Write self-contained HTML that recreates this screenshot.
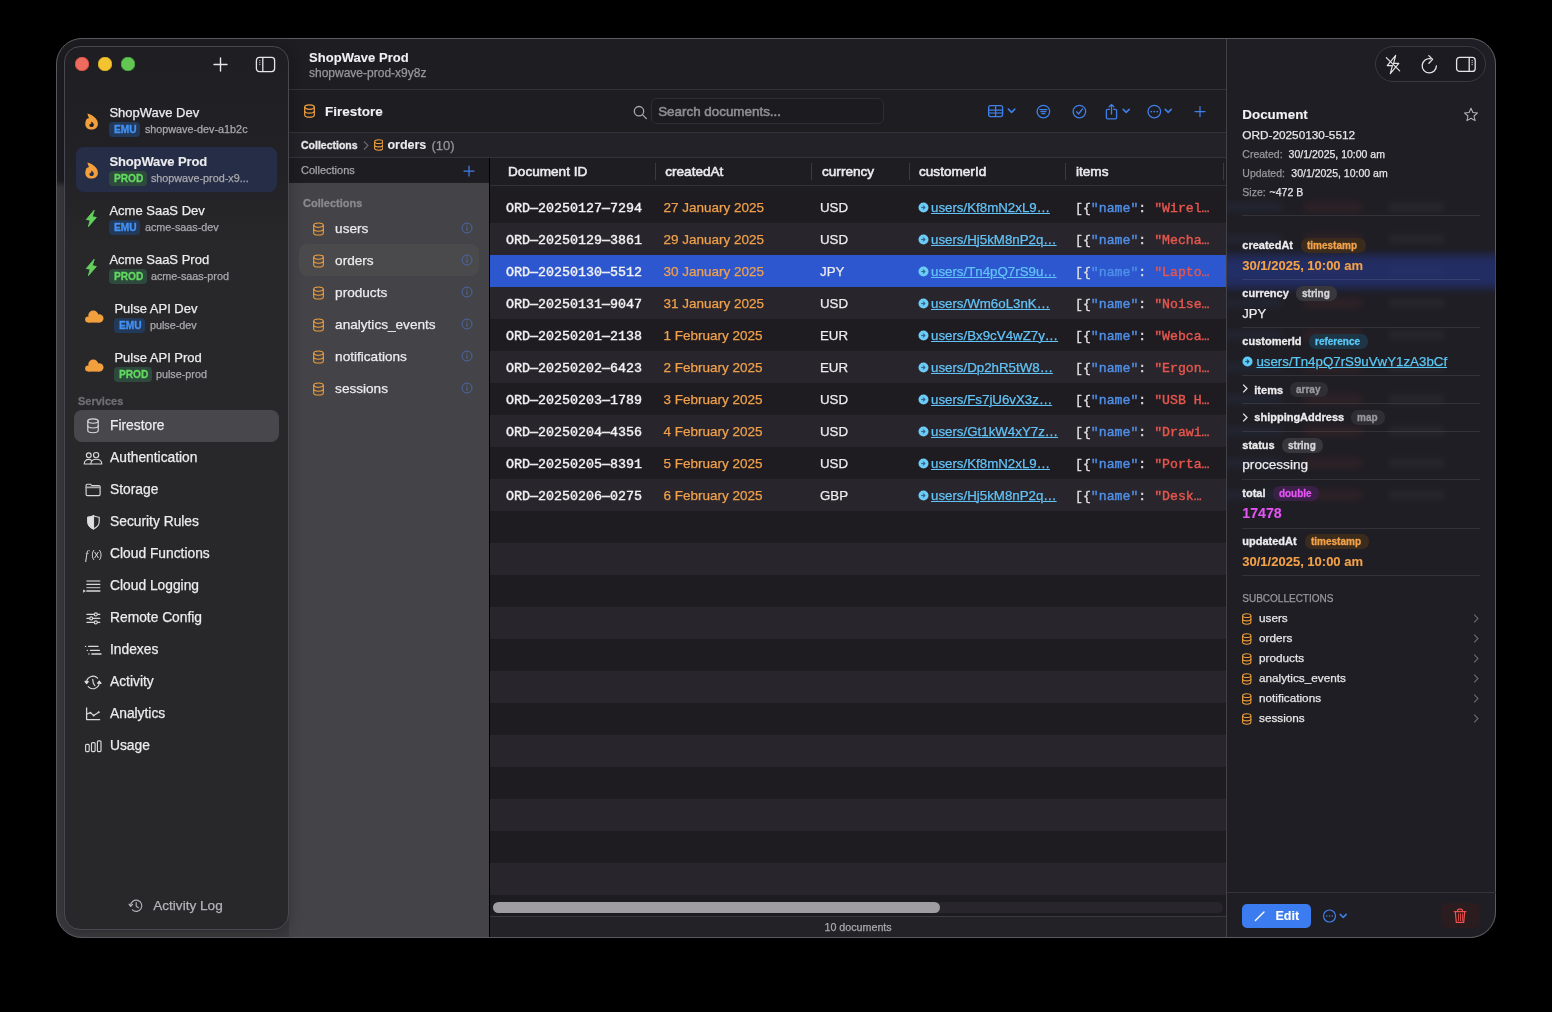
<!DOCTYPE html><html><head><meta charset="utf-8"><title>ShopWave Prod</title><style>*{margin:0;padding:0;box-sizing:border-box}
html,body{width:1552px;height:1012px;overflow:hidden;background:#000}
body{position:relative;font-family:'Liberation Sans',sans-serif}
.abs{position:absolute}
.t{position:absolute;white-space:pre}
#root{position:absolute;left:0;top:0;width:1552px;height:1012px;will-change:transform}
</style></head><body><div id="root"><div class="abs" style="left:56px;top:38px;width:1440px;height:900px;border-radius:26px;overflow:hidden;background:linear-gradient(#1e1d22 0,#1e1d22 142px,#3b3a3e 150px,#3b3a3e 100%)">
<div class="abs" style="left:233px;top:0px;width:937px;height:51px;background:#1e1d22;"></div>
<div class="abs" style="left:233px;top:51px;width:937px;height:1px;background:#34333a;"></div>
<div class="abs" style="left:233px;top:52px;width:937px;height:42px;background:#1e1d22;"></div>
<div class="abs" style="left:233px;top:94px;width:937px;height:1px;background:#34333a;"></div>
<div class="abs" style="left:233px;top:95px;width:937px;height:24px;background:#232228;"></div>
<div class="abs" style="left:233px;top:119px;width:937px;height:1px;background:#34333a;"></div>
<div class="abs" style="left:233px;top:120px;width:200px;height:25px;background:#1e1d22;"></div>
<div class="abs" style="left:233px;top:145px;width:200px;height:755px;background:#444347;"></div>
<div class="abs" style="left:433px;top:120px;width:1px;height:780px;background:#000000;"></div>
<div class="abs" style="left:434px;top:120px;width:736px;height:27px;background:#1e1d22;"></div>
<div class="abs" style="left:434px;top:147px;width:736px;height:1px;background:#34333a;"></div>
<div class="abs" style="left:434px;top:148px;width:736px;height:5px;background:#1e1d22;"></div>
<div class="abs" style="left:434px;top:153px;width:736px;height:32px;background:#1e1c21;"></div>
<div class="abs" style="left:434px;top:185px;width:736px;height:32px;background:#28262c;"></div>
<div class="abs" style="left:434px;top:217px;width:736px;height:32px;background:#2c57cf;"></div>
<div class="abs" style="left:434px;top:249px;width:736px;height:32px;background:#28262c;"></div>
<div class="abs" style="left:434px;top:281px;width:736px;height:32px;background:#1e1c21;"></div>
<div class="abs" style="left:434px;top:313px;width:736px;height:32px;background:#28262c;"></div>
<div class="abs" style="left:434px;top:345px;width:736px;height:32px;background:#1e1c21;"></div>
<div class="abs" style="left:434px;top:377px;width:736px;height:32px;background:#28262c;"></div>
<div class="abs" style="left:434px;top:409px;width:736px;height:32px;background:#1e1c21;"></div>
<div class="abs" style="left:434px;top:441px;width:736px;height:32px;background:#28262c;"></div>
<div class="abs" style="left:434px;top:473px;width:736px;height:32px;background:#1e1c21;"></div>
<div class="abs" style="left:434px;top:505px;width:736px;height:32px;background:#28262c;"></div>
<div class="abs" style="left:434px;top:537px;width:736px;height:32px;background:#1e1c21;"></div>
<div class="abs" style="left:434px;top:569px;width:736px;height:32px;background:#28262c;"></div>
<div class="abs" style="left:434px;top:601px;width:736px;height:32px;background:#1e1c21;"></div>
<div class="abs" style="left:434px;top:633px;width:736px;height:32px;background:#28262c;"></div>
<div class="abs" style="left:434px;top:665px;width:736px;height:32px;background:#1e1c21;"></div>
<div class="abs" style="left:434px;top:697px;width:736px;height:32px;background:#28262c;"></div>
<div class="abs" style="left:434px;top:729px;width:736px;height:32px;background:#1e1c21;"></div>
<div class="abs" style="left:434px;top:761px;width:736px;height:32px;background:#28262c;"></div>
<div class="abs" style="left:434px;top:793px;width:736px;height:32px;background:#1e1c21;"></div>
<div class="abs" style="left:434px;top:825px;width:736px;height:32px;background:#28262c;"></div>
<div class="abs" style="left:434px;top:857px;width:736px;height:21px;background:#1d1c21;"></div>
<div class="abs" style="left:437px;top:864px;width:730px;height:11px;background:#28262c;border-radius:6px"></div>
<div class="abs" style="left:437px;top:864px;width:447px;height:11px;background:#9f9da2;border-radius:6px"></div>
<div class="abs" style="left:434px;top:878px;width:736px;height:1px;background:#3a393f;"></div>
<div class="abs" style="left:434px;top:879px;width:736px;height:21px;background:#232227;"></div>
<div class="abs" style="left:1170px;top:0px;width:1px;height:900px;background:#444249;"></div>
<div class="abs" style="left:1171px;top:0px;width:269px;height:900px;background:#1f1e24;"></div>
</div>
<div class="abs" style="left:56px;top:38px;width:1440px;height:900px;border-radius:26px;border:1px solid #5c5b61"></div>
<div class="abs" style="left:64px;top:46px;width:225px;height:884px;border-radius:16px;border:1px solid #49474f;box-shadow:0 2px 14px rgba(0,0,0,0.28);background:linear-gradient(#1f1e23 0,#222125 120px,#28282a 200px,#28282a 100%)"></div>
<div class="abs" style="left:75px;top:57px;width:14px;height:14px;border-radius:50%;background:#ec6a5e;box-shadow:inset 0 0 0 0.5px #d6473b"></div>
<div class="abs" style="left:98px;top:57px;width:14px;height:14px;border-radius:50%;background:#f4c430;box-shadow:inset 0 0 0 0.5px #d9a623"></div>
<div class="abs" style="left:121px;top:57px;width:14px;height:14px;border-radius:50%;background:#62c554;box-shadow:inset 0 0 0 0.5px #3ea634"></div>
<svg class="abs" style="left:213px;top:57px" width="15" height="15" viewBox="0 0 15 15"><path d="M7.5 1V14M1 7.5H14" stroke="#e6e6e8" stroke-width="1.4" stroke-linecap="round"/></svg>
<svg class="abs" style="left:255px;top:56px" width="21" height="17" viewBox="0 0 21 17"><rect x="1.4" y="1.4" width="18.2" height="14.2" rx="3" fill="none" stroke="#e6e6e8" stroke-width="1.3"/><path d="M7.8 1.4V15.6" stroke="#e6e6e8" stroke-width="1.3"/><path d="M4.2 4.6H5.4M4.2 6.6H5.4M4.2 8.6H5.4" stroke="#bdbdc0" stroke-width="1"/></svg>
<div class="abs" style="left:76px;top:147px;width:201px;height:45px;background:#262d47;border-radius:8px"></div>
<svg class="abs" style="left:84.5px;top:112.5px" width="14" height="18" viewBox="0 0 14 18"><path fill="#f2a03d" fill-rule="evenodd" d="M2.4 0.6C5.5 1.2 8.5 3 10.8 5.6C12.2 7.2 12.9 9 12.9 11C12.9 14.2 10.2 16.6 6.4 16.6C2.8 16.6 0.3 14.2 0.3 11C0.3 9 0.9 7.2 1.6 5.9L4 5.1C3.2 3.8 2.6 2.2 2.4 0.6ZM6.5 8.4C7.9 9.4 8.9 10.6 8.9 12C8.9 13.2 7.8 14.1 6.5 14.1C5.3 14.1 4.4 13.3 4.4 12.2C4.4 11.4 4.8 10.8 5.3 10.4C5.6 11 6 11.2 6.2 11.2C6.1 10.2 6.2 9.2 6.5 8.4Z"/></svg>
<div class="t" style="left:109.4px;top:106.00px;font-size:13px;line-height:13px;color:#ececee;font-weight:400;font-family:'Liberation Sans',sans-serif;-webkit-text-stroke:0.25px currentColor;">ShopWave Dev</div>
<div class="abs" style="left:109.4px;top:122px;width:31px;height:15px;background:#22395a;border-radius:4px"></div><div class="t" style="left:113.9px;top:124.57px;font-size:10.2px;line-height:10.2px;color:#4492f5;font-weight:700;font-family:'Liberation Sans',sans-serif;-webkit-text-stroke:0.3px currentColor;">EMU</div>
<div class="t" style="left:144.9px;top:124.36px;font-size:10.8px;line-height:10.8px;color:#a9a8ad;font-weight:400;font-family:'Liberation Sans',sans-serif;-webkit-text-stroke:0.25px currentColor;">shopwave-dev-a1b2c</div>
<svg class="abs" style="left:84.5px;top:161.5px" width="14" height="18" viewBox="0 0 14 18"><path fill="#f2a03d" fill-rule="evenodd" d="M2.4 0.6C5.5 1.2 8.5 3 10.8 5.6C12.2 7.2 12.9 9 12.9 11C12.9 14.2 10.2 16.6 6.4 16.6C2.8 16.6 0.3 14.2 0.3 11C0.3 9 0.9 7.2 1.6 5.9L4 5.1C3.2 3.8 2.6 2.2 2.4 0.6ZM6.5 8.4C7.9 9.4 8.9 10.6 8.9 12C8.9 13.2 7.8 14.1 6.5 14.1C5.3 14.1 4.4 13.3 4.4 12.2C4.4 11.4 4.8 10.8 5.3 10.4C5.6 11 6 11.2 6.2 11.2C6.1 10.2 6.2 9.2 6.5 8.4Z"/></svg>
<div class="t" style="left:109.4px;top:155.00px;font-size:13px;line-height:13px;color:#ececee;font-weight:700;font-family:'Liberation Sans',sans-serif;-webkit-text-stroke:0.1px currentColor;letter-spacing:-0.12px;">ShopWave Prod</div>
<div class="abs" style="left:109.4px;top:171px;width:37.5px;height:15px;background:#2d4a3c;border-radius:4px"></div><div class="t" style="left:113.9px;top:173.57px;font-size:10.2px;line-height:10.2px;color:#62d860;font-weight:700;font-family:'Liberation Sans',sans-serif;-webkit-text-stroke:0.3px currentColor;">PROD</div>
<div class="t" style="left:150.9px;top:173.36px;font-size:10.8px;line-height:10.8px;color:#a9a8ad;font-weight:400;font-family:'Liberation Sans',sans-serif;-webkit-text-stroke:0.25px currentColor;">shopwave-prod-x9...</div>
<svg class="abs" style="left:85px;top:209px" width="13" height="19" viewBox="0 0 13 19"><path fill="#62d05a" stroke="#62d05a" stroke-width="0.9" stroke-linejoin="round" d="M9.2 1.2L1.3 10.5L5.2 11.2L3.4 17.6L11.4 8.5L7.3 7.7Z"/></svg>
<div class="t" style="left:109.4px;top:204.00px;font-size:13px;line-height:13px;color:#ececee;font-weight:400;font-family:'Liberation Sans',sans-serif;-webkit-text-stroke:0.25px currentColor;">Acme SaaS Dev</div>
<div class="abs" style="left:109.4px;top:220px;width:31px;height:15px;background:#22395a;border-radius:4px"></div><div class="t" style="left:113.9px;top:222.57px;font-size:10.2px;line-height:10.2px;color:#4492f5;font-weight:700;font-family:'Liberation Sans',sans-serif;-webkit-text-stroke:0.3px currentColor;">EMU</div>
<div class="t" style="left:144.9px;top:222.36px;font-size:10.8px;line-height:10.8px;color:#a9a8ad;font-weight:400;font-family:'Liberation Sans',sans-serif;-webkit-text-stroke:0.25px currentColor;">acme-saas-dev</div>
<svg class="abs" style="left:85px;top:258px" width="13" height="19" viewBox="0 0 13 19"><path fill="#62d05a" stroke="#62d05a" stroke-width="0.9" stroke-linejoin="round" d="M9.2 1.2L1.3 10.5L5.2 11.2L3.4 17.6L11.4 8.5L7.3 7.7Z"/></svg>
<div class="t" style="left:109.4px;top:253.00px;font-size:13px;line-height:13px;color:#ececee;font-weight:400;font-family:'Liberation Sans',sans-serif;-webkit-text-stroke:0.25px currentColor;">Acme SaaS Prod</div>
<div class="abs" style="left:109.4px;top:269px;width:37.5px;height:15px;background:#2d4a3c;border-radius:4px"></div><div class="t" style="left:113.9px;top:271.57px;font-size:10.2px;line-height:10.2px;color:#62d860;font-weight:700;font-family:'Liberation Sans',sans-serif;-webkit-text-stroke:0.3px currentColor;">PROD</div>
<div class="t" style="left:150.9px;top:271.36px;font-size:10.8px;line-height:10.8px;color:#a9a8ad;font-weight:400;font-family:'Liberation Sans',sans-serif;-webkit-text-stroke:0.25px currentColor;">acme-saas-prod</div>
<svg class="abs" style="left:84.5px;top:310px" width="19" height="13" viewBox="0 0 19 13"><g fill="#f2a03d"><circle cx="8.3" cy="5.6" r="5"/><circle cx="14.3" cy="8.4" r="4.2"/><circle cx="3.1" cy="9.6" r="3"/><rect x="3.1" y="8" width="11.4" height="4.6"/></g></svg>
<div class="t" style="left:114.4px;top:302.00px;font-size:13px;line-height:13px;color:#ececee;font-weight:400;font-family:'Liberation Sans',sans-serif;-webkit-text-stroke:0.25px currentColor;">Pulse API Dev</div>
<div class="abs" style="left:114.4px;top:318px;width:31px;height:15px;background:#22395a;border-radius:4px"></div><div class="t" style="left:118.9px;top:320.57px;font-size:10.2px;line-height:10.2px;color:#4492f5;font-weight:700;font-family:'Liberation Sans',sans-serif;-webkit-text-stroke:0.3px currentColor;">EMU</div>
<div class="t" style="left:149.9px;top:320.36px;font-size:10.8px;line-height:10.8px;color:#a9a8ad;font-weight:400;font-family:'Liberation Sans',sans-serif;-webkit-text-stroke:0.25px currentColor;">pulse-dev</div>
<svg class="abs" style="left:84.5px;top:359px" width="19" height="13" viewBox="0 0 19 13"><g fill="#f2a03d"><circle cx="8.3" cy="5.6" r="5"/><circle cx="14.3" cy="8.4" r="4.2"/><circle cx="3.1" cy="9.6" r="3"/><rect x="3.1" y="8" width="11.4" height="4.6"/></g></svg>
<div class="t" style="left:114.4px;top:351.00px;font-size:13px;line-height:13px;color:#ececee;font-weight:400;font-family:'Liberation Sans',sans-serif;-webkit-text-stroke:0.25px currentColor;">Pulse API Prod</div>
<div class="abs" style="left:114.4px;top:367px;width:37.5px;height:15px;background:#2d4a3c;border-radius:4px"></div><div class="t" style="left:118.9px;top:369.57px;font-size:10.2px;line-height:10.2px;color:#62d860;font-weight:700;font-family:'Liberation Sans',sans-serif;-webkit-text-stroke:0.3px currentColor;">PROD</div>
<div class="t" style="left:155.9px;top:369.36px;font-size:10.8px;line-height:10.8px;color:#a9a8ad;font-weight:400;font-family:'Liberation Sans',sans-serif;-webkit-text-stroke:0.25px currentColor;">pulse-prod</div>
<div class="t" style="left:78px;top:395.69px;font-size:11px;line-height:11px;color:#6f6e74;font-weight:700;font-family:'Liberation Sans',sans-serif;-webkit-text-stroke:0.3px currentColor;">Services</div>
<div class="abs" style="left:74px;top:410px;width:205px;height:32px;background:#48474b;border-radius:8px"></div>
<svg class="abs" style="left:83px;top:417px" width="20" height="18" viewBox="0 0 20 18"><g fill="none" stroke="#d9d9dc" stroke-width="1.15" stroke-linecap="round" stroke-linejoin="round"><ellipse cx="10" cy="4" rx="5.2" ry="2.2"/><path d="M4.8 4V13.6A5.2 2.2 0 0 0 15.2 13.6V4"/><path d="M4.8 8.8A5.2 2.2 0 0 0 15.2 8.8"/></g></svg>
<div class="t" style="left:110px;top:419.32px;font-size:13.8px;line-height:13.8px;color:#ececee;font-weight:400;font-family:'Liberation Sans',sans-serif;-webkit-text-stroke:0.25px currentColor;">Firestore</div>
<svg class="abs" style="left:83px;top:449px" width="20" height="18" viewBox="0 0 20 18"><g fill="none" stroke="#d9d9dc" stroke-width="1.15" stroke-linecap="round" stroke-linejoin="round"><circle cx="5.8" cy="6.3" r="2.4"/><circle cx="13.1" cy="6.1" r="2.6"/><path d="M7.8 15C7.8 12.1 10.2 10.2 13.3 10.2C16.4 10.2 18.8 12.1 18.8 15Z"/><path d="M7.6 15H1.2C1.2 12.4 3.2 10.4 5.8 10.4C6.9 10.4 7.9 10.8 8.7 11.4"/></g></svg>
<div class="t" style="left:110px;top:451.32px;font-size:13.8px;line-height:13.8px;color:#ececee;font-weight:400;font-family:'Liberation Sans',sans-serif;-webkit-text-stroke:0.25px currentColor;">Authentication</div>
<svg class="abs" style="left:83px;top:481px" width="20" height="18" viewBox="0 0 20 18"><g fill="none" stroke="#d9d9dc" stroke-width="1.15" stroke-linecap="round" stroke-linejoin="round"><path d="M3.1 4.6C3.1 3.8 3.6 3.2 4.4 3.2H7.4L8.8 4.6H15.8C16.6 4.6 17.1 5.1 17.1 5.9V13.3C17.1 14.1 16.6 14.6 15.8 14.6H4.4C3.6 14.6 3.1 14.1 3.1 13.3Z"/><path d="M3.1 6.4H17.1" stroke-width="1.6" stroke="#a9a9ac"/></g></svg>
<div class="t" style="left:110px;top:483.32px;font-size:13.8px;line-height:13.8px;color:#ececee;font-weight:400;font-family:'Liberation Sans',sans-serif;-webkit-text-stroke:0.25px currentColor;">Storage</div>
<svg class="abs" style="left:83px;top:513px" width="20" height="18" viewBox="0 0 20 18"><g fill="none" stroke="#d9d9dc" stroke-width="1.15" stroke-linecap="round" stroke-linejoin="round"><path d="M10.5 2.7C12.2 3.5 14.2 4 16.2 4.2V8.6C16.2 12.2 13.9 14.6 10.5 15.9C7.1 14.6 4.8 12.2 4.8 8.6V4.2C6.8 4 8.8 3.5 10.5 2.7Z"/><path d="M10.5 2.7V15.9C7.1 14.6 4.8 12.2 4.8 8.6V4.2C6.8 4 8.8 3.5 10.5 2.7Z" fill="#e0e0e2"/></g></svg>
<div class="t" style="left:110px;top:515.32px;font-size:13.8px;line-height:13.8px;color:#ececee;font-weight:400;font-family:'Liberation Sans',sans-serif;-webkit-text-stroke:0.25px currentColor;">Security Rules</div>
<svg class="abs" style="left:83px;top:545px" width="20" height="18" viewBox="0 0 20 18"><g fill="none" stroke="#d9d9dc" stroke-width="1.15" stroke-linecap="round" stroke-linejoin="round"></g><text x="2" y="13.6" font-family="Liberation Serif" font-style="italic" font-size="12" fill="#d9d9dc">f</text><text x="8.2" y="13.2" font-family="Liberation Sans" font-size="10" fill="#d9d9dc" letter-spacing="-0.4">(x)</text><g></g></svg>
<div class="t" style="left:110px;top:547.32px;font-size:13.8px;line-height:13.8px;color:#ececee;font-weight:400;font-family:'Liberation Sans',sans-serif;-webkit-text-stroke:0.25px currentColor;">Cloud Functions</div>
<svg class="abs" style="left:83px;top:577px" width="20" height="18" viewBox="0 0 20 18"><g fill="none" stroke="#d9d9dc" stroke-width="1.15" stroke-linecap="round" stroke-linejoin="round"><path d="M3.9 4H16.8" stroke-width="1.3" stroke="#a9a9ac"/><path d="M3.9 7.4H16.8" stroke-width="1.3"/><path d="M3.9 10.6H16.8" stroke-width="1.3" stroke="#a9a9ac"/><path d="M3.9 14H16.8" stroke-width="1.5"/><path d="M0.2 12.4L2.9 14L0.2 15.7Z" fill="#d9d9dc" stroke="none"/></g></svg>
<div class="t" style="left:110px;top:579.32px;font-size:13.8px;line-height:13.8px;color:#ececee;font-weight:400;font-family:'Liberation Sans',sans-serif;-webkit-text-stroke:0.25px currentColor;">Cloud Logging</div>
<svg class="abs" style="left:83px;top:609px" width="20" height="18" viewBox="0 0 20 18"><g fill="none" stroke="#d9d9dc" stroke-width="1.15" stroke-linecap="round" stroke-linejoin="round"><path d="M3.9 5.4H16.8M3.9 9.4H16.8M3.9 13.4H16.8"/><circle cx="12.8" cy="5.4" r="1.5" fill="#28282a"/><circle cx="8.2" cy="9.4" r="1.5" fill="#28282a"/><circle cx="12.8" cy="13.4" r="1.5" fill="#28282a"/></g></svg>
<div class="t" style="left:110px;top:611.32px;font-size:13.8px;line-height:13.8px;color:#ececee;font-weight:400;font-family:'Liberation Sans',sans-serif;-webkit-text-stroke:0.25px currentColor;">Remote Config</div>
<svg class="abs" style="left:83px;top:641px" width="20" height="18" viewBox="0 0 20 18"><g fill="none" stroke="#d9d9dc" stroke-width="1.15" stroke-linecap="round" stroke-linejoin="round"><path d="M5.6 5.4H15M7.4 9.4H16.4M8.8 13H18" stroke-width="1.3"/><circle cx="2.6" cy="5.4" r="0.7" fill="#d9d9dc" stroke="none"/><circle cx="4.4" cy="9.4" r="0.7" fill="#d9d9dc" stroke="none"/><circle cx="5.9" cy="13" r="0.7" fill="#d9d9dc" stroke="none"/></g></svg>
<div class="t" style="left:110px;top:643.32px;font-size:13.8px;line-height:13.8px;color:#ececee;font-weight:400;font-family:'Liberation Sans',sans-serif;-webkit-text-stroke:0.25px currentColor;">Indexes</div>
<svg class="abs" style="left:83px;top:673px" width="20" height="18" viewBox="0 0 20 18"><g fill="none" stroke="#d9d9dc" stroke-width="1.15" stroke-linecap="round" stroke-linejoin="round"><path d="M3.6 9.9A6.4 6.4 0 0 1 14.6 5.2"/><path d="M16.3 8.9A6.4 6.4 0 0 1 5.2 13.6"/><path d="M2 8.4L3.6 10.6L5.3 8.6Z" fill="#d9d9dc"/><path d="M18 10.4L16.3 8.2L14.6 10.2Z" fill="#d9d9dc"/><path d="M9.7 6.4L10.4 10.4L11.9 12.7"/></g></svg>
<div class="t" style="left:110px;top:675.32px;font-size:13.8px;line-height:13.8px;color:#ececee;font-weight:400;font-family:'Liberation Sans',sans-serif;-webkit-text-stroke:0.25px currentColor;">Activity</div>
<svg class="abs" style="left:83px;top:705px" width="20" height="18" viewBox="0 0 20 18"><g fill="none" stroke="#d9d9dc" stroke-width="1.15" stroke-linecap="round" stroke-linejoin="round"><path d="M3.6 3V14.6H16.6" stroke-width="1.3"/><path d="M3.9 8.9L7.4 7.7L10.7 10.4L15.7 7.2"/><g fill="#d9d9dc" stroke="none"><circle cx="7.4" cy="7.7" r="1"/><circle cx="10.7" cy="10.4" r="1"/><circle cx="15.7" cy="7.2" r="1"/></g></g></svg>
<div class="t" style="left:110px;top:707.32px;font-size:13.8px;line-height:13.8px;color:#ececee;font-weight:400;font-family:'Liberation Sans',sans-serif;-webkit-text-stroke:0.25px currentColor;">Analytics</div>
<svg class="abs" style="left:83px;top:737px" width="20" height="18" viewBox="0 0 20 18"><g fill="none" stroke="#d9d9dc" stroke-width="1.15" stroke-linecap="round" stroke-linejoin="round"><rect x="2.6" y="7.4" width="3.6" height="7.2" rx="1"/><rect x="8.5" y="5.6" width="3.6" height="9" rx="1"/><rect x="14.4" y="3.8" width="3.6" height="10.8" rx="1"/></g></svg>
<div class="t" style="left:110px;top:739.32px;font-size:13.8px;line-height:13.8px;color:#ececee;font-weight:400;font-family:'Liberation Sans',sans-serif;-webkit-text-stroke:0.25px currentColor;">Usage</div>
<svg class="abs" style="left:128px;top:898px" width="16" height="16" viewBox="0 0 16 16"><g fill="none" stroke="#b4b3b8" stroke-width="1.15" stroke-linecap="round" stroke-linejoin="round"><path d="M2.6 7.6A5.6 5.6 0 1 1 4.4 11.9"/><path d="M1 6.2L2.7 8.4L4.6 6.4"/><path d="M8.2 4.6V8.1L10.4 9.7"/></g></svg>
<div class="t" style="left:153.2px;top:899.49px;font-size:13.6px;line-height:13.6px;color:#b4b3b8;font-weight:400;font-family:'Liberation Sans',sans-serif;-webkit-text-stroke:0.25px currentColor;">Activity Log</div>
<div class="t" style="left:309px;top:51.00px;font-size:13px;line-height:13px;color:#f0f0f2;font-weight:700;font-family:'Liberation Sans',sans-serif;-webkit-text-stroke:0.1px currentColor;letter-spacing:0.05px">ShopWave Prod</div>
<div class="t" style="left:309px;top:66.84px;font-size:12px;line-height:12px;color:#98979c;font-weight:400;font-family:'Liberation Sans',sans-serif;-webkit-text-stroke:0.25px currentColor;">shopwave-prod-x9y8z</div>
<svg class="abs" style="left:304px;top:104px" width="11" height="14" viewBox="0 0 11 14"><g fill="none" stroke="#f0a03c" stroke-width="1.2"><ellipse cx="5.5" cy="3.1" rx="4.8" ry="2.2"/><path d="M0.7 3.1V10.9A4.8 2.2 0 0 0 10.3 10.9V3.1"/><path d="M0.7 7A4.8 2.2 0 0 0 10.3 7"/></g></svg>
<div class="t" style="left:325px;top:104.57px;font-size:13.5px;line-height:13.5px;color:#f0f0f2;font-weight:700;font-family:'Liberation Sans',sans-serif;-webkit-text-stroke:0.1px currentColor;">Firestore</div>
<svg class="abs" style="left:633px;top:105px" width="15" height="15" viewBox="0 0 15 15"><g fill="none" stroke="#a8a7ac" stroke-width="1.3" stroke-linecap="round"><circle cx="6" cy="6.2" r="4.7"/><path d="M9.4 9.6L13.4 13.6"/></g></svg>
<div class="abs" style="left:651px;top:98px;width:233px;height:26px;background:#1c1b20;border-radius:6px;border:1px solid #2e2d33"></div>
<div class="t" style="left:658.2px;top:104.66px;font-size:13.4px;line-height:13.4px;color:#8f8e94;font-weight:400;font-family:'Liberation Sans',sans-serif;-webkit-text-stroke:0.55px currentColor;">Search documents...</div>
<svg class="abs" style="left:985px;top:100px" width="230" height="24" viewBox="0 0 230 24"><g fill="none" stroke="#3f7fe8" stroke-width="1.3" stroke-linecap="round" stroke-linejoin="round"><rect x="3.6" y="5.6" width="14" height="11" rx="2"/><path d="M3.6 10.1H17.6M10.6 5.6V16.6"/><path d="M3.8 13H17.4" stroke-width="1.7" stroke-opacity="0.75"/><path d="M23.4 9.1L26.6 12.4L29.8 9.1" stroke-width="1.6"/><circle cx="58.4" cy="11.6" r="6.3"/><path d="M54.9 9.6H61.9M55.9 11.7H60.9M57 13.7H59.8"/><circle cx="94.4" cy="11.6" r="6.3"/><path d="M91.6 11.8L93.6 14L97.4 9"/><path d="M124.4 9.3H122.6C121.9 9.3 121.4 9.8 121.4 10.5V17.6C121.4 18.3 121.9 18.8 122.6 18.8H130.4C131.1 18.8 131.6 18.3 131.6 17.6V10.5C131.6 9.8 131.1 9.3 130.4 9.3H128.6"/><path d="M126.5 14V4.6M124.2 6.8L126.5 4.5L128.8 6.8"/><path d="M138.2 9.4L141.2 12.4L144.2 9.4" stroke-width="1.6"/><circle cx="169.3" cy="11.6" r="6.3"/><path d="M180.2 9.4L183.2 12.4L186.2 9.4" stroke-width="1.6"/><path d="M215 6.6V16.6M210 11.6H220" stroke-width="1.25"/></g><g fill="#3f7fe8"><circle cx="166.3" cy="11.6" r="0.9"/><circle cx="169.3" cy="11.6" r="0.9"/><circle cx="172.3" cy="11.6" r="0.9"/></g></svg>
<div class="t" style="left:301px;top:140.11px;font-size:10.5px;line-height:10.5px;color:#e6e6e8;font-weight:700;font-family:'Liberation Sans',sans-serif;-webkit-text-stroke:0.3px currentColor;">Collections</div>
<svg class="abs" style="left:362px;top:140px" width="8" height="11" viewBox="0 0 8 11"><path d="M2 1.5L6 5.5L2 9.5" fill="none" stroke="#6a6970" stroke-width="1.1"/></svg>
<svg class="abs" style="left:373.5px;top:138.5px" width="9.5" height="12" viewBox="0 0 11 14"><g fill="none" stroke="#f0a03c" stroke-width="1.3"><ellipse cx="5.5" cy="3.1" rx="4.8" ry="2.2"/><path d="M0.7 3.1V10.9A4.8 2.2 0 0 0 10.3 10.9V3.1"/><path d="M0.7 7A4.8 2.2 0 0 0 10.3 7"/></g></svg>
<div class="t" style="left:387.4px;top:138.92px;font-size:12.5px;line-height:12.5px;color:#ececee;font-weight:700;font-family:'Liberation Sans',sans-serif;-webkit-text-stroke:0.1px currentColor;">orders</div>
<div class="t" style="left:431.5px;top:138.50px;font-size:13px;line-height:13px;color:#98979c;font-weight:400;font-family:'Liberation Sans',sans-serif;-webkit-text-stroke:0.25px currentColor;">(10)</div>
<div class="t" style="left:301px;top:165.19px;font-size:11px;line-height:11px;color:#a5a4aa;font-weight:400;font-family:'Liberation Sans',sans-serif;-webkit-text-stroke:0.25px currentColor;">Collections</div>
<svg class="abs" style="left:462.2px;top:163.6px" width="14" height="14" viewBox="0 0 14 14"><path d="M7 2V12M2 7H12" stroke="#3f7fe8" stroke-width="1.25" stroke-linecap="round"/></svg>
<div class="t" style="left:303px;top:197.69px;font-size:11px;line-height:11px;color:#8a898f;font-weight:700;font-family:'Liberation Sans',sans-serif;-webkit-text-stroke:0.3px currentColor;">Collections</div>
<div class="abs" style="left:299px;top:244px;width:180px;height:32px;background:#4a494c;border-radius:8px"></div>
<svg class="abs" style="left:312.8px;top:221.5px" width="11" height="14" viewBox="0 0 11 14"><g fill="none" stroke="#f0a03c" stroke-width="1.05"><ellipse cx="5.5" cy="3.1" rx="4.8" ry="2.2"/><path d="M0.7 3.1V10.9A4.8 2.2 0 0 0 10.3 10.9V3.1"/><path d="M0.7 7A4.8 2.2 0 0 0 10.3 7"/></g></svg>
<div class="t" style="left:335.1px;top:222.09px;font-size:13.6px;line-height:13.6px;color:#ececee;font-weight:400;font-family:'Liberation Sans',sans-serif;-webkit-text-stroke:0.25px currentColor;">users</div>
<svg class="abs" style="left:460.8px;top:222px" width="12" height="12" viewBox="0 0 12 12"><circle cx="6" cy="6" r="5" fill="none" stroke="#4b68a8" stroke-width="1"/><path d="M6 5.2V8.8" stroke="#4b68a8" stroke-width="1.1"/><circle cx="6" cy="3.4" r="0.65" fill="#4b68a8"/></svg>
<svg class="abs" style="left:312.8px;top:253.5px" width="11" height="14" viewBox="0 0 11 14"><g fill="none" stroke="#f0a03c" stroke-width="1.05"><ellipse cx="5.5" cy="3.1" rx="4.8" ry="2.2"/><path d="M0.7 3.1V10.9A4.8 2.2 0 0 0 10.3 10.9V3.1"/><path d="M0.7 7A4.8 2.2 0 0 0 10.3 7"/></g></svg>
<div class="t" style="left:335.1px;top:254.09px;font-size:13.6px;line-height:13.6px;color:#ececee;font-weight:400;font-family:'Liberation Sans',sans-serif;-webkit-text-stroke:0.25px currentColor;">orders</div>
<svg class="abs" style="left:460.8px;top:254px" width="12" height="12" viewBox="0 0 12 12"><circle cx="6" cy="6" r="5" fill="none" stroke="#4b68a8" stroke-width="1"/><path d="M6 5.2V8.8" stroke="#4b68a8" stroke-width="1.1"/><circle cx="6" cy="3.4" r="0.65" fill="#4b68a8"/></svg>
<svg class="abs" style="left:312.8px;top:285.5px" width="11" height="14" viewBox="0 0 11 14"><g fill="none" stroke="#f0a03c" stroke-width="1.05"><ellipse cx="5.5" cy="3.1" rx="4.8" ry="2.2"/><path d="M0.7 3.1V10.9A4.8 2.2 0 0 0 10.3 10.9V3.1"/><path d="M0.7 7A4.8 2.2 0 0 0 10.3 7"/></g></svg>
<div class="t" style="left:335.1px;top:286.09px;font-size:13.6px;line-height:13.6px;color:#ececee;font-weight:400;font-family:'Liberation Sans',sans-serif;-webkit-text-stroke:0.25px currentColor;">products</div>
<svg class="abs" style="left:460.8px;top:286px" width="12" height="12" viewBox="0 0 12 12"><circle cx="6" cy="6" r="5" fill="none" stroke="#4b68a8" stroke-width="1"/><path d="M6 5.2V8.8" stroke="#4b68a8" stroke-width="1.1"/><circle cx="6" cy="3.4" r="0.65" fill="#4b68a8"/></svg>
<svg class="abs" style="left:312.8px;top:317.5px" width="11" height="14" viewBox="0 0 11 14"><g fill="none" stroke="#f0a03c" stroke-width="1.05"><ellipse cx="5.5" cy="3.1" rx="4.8" ry="2.2"/><path d="M0.7 3.1V10.9A4.8 2.2 0 0 0 10.3 10.9V3.1"/><path d="M0.7 7A4.8 2.2 0 0 0 10.3 7"/></g></svg>
<div class="t" style="left:335.1px;top:318.09px;font-size:13.6px;line-height:13.6px;color:#ececee;font-weight:400;font-family:'Liberation Sans',sans-serif;-webkit-text-stroke:0.25px currentColor;">analytics_events</div>
<svg class="abs" style="left:460.8px;top:318px" width="12" height="12" viewBox="0 0 12 12"><circle cx="6" cy="6" r="5" fill="none" stroke="#4b68a8" stroke-width="1"/><path d="M6 5.2V8.8" stroke="#4b68a8" stroke-width="1.1"/><circle cx="6" cy="3.4" r="0.65" fill="#4b68a8"/></svg>
<svg class="abs" style="left:312.8px;top:349.5px" width="11" height="14" viewBox="0 0 11 14"><g fill="none" stroke="#f0a03c" stroke-width="1.05"><ellipse cx="5.5" cy="3.1" rx="4.8" ry="2.2"/><path d="M0.7 3.1V10.9A4.8 2.2 0 0 0 10.3 10.9V3.1"/><path d="M0.7 7A4.8 2.2 0 0 0 10.3 7"/></g></svg>
<div class="t" style="left:335.1px;top:350.09px;font-size:13.6px;line-height:13.6px;color:#ececee;font-weight:400;font-family:'Liberation Sans',sans-serif;-webkit-text-stroke:0.25px currentColor;">notifications</div>
<svg class="abs" style="left:460.8px;top:350px" width="12" height="12" viewBox="0 0 12 12"><circle cx="6" cy="6" r="5" fill="none" stroke="#4b68a8" stroke-width="1"/><path d="M6 5.2V8.8" stroke="#4b68a8" stroke-width="1.1"/><circle cx="6" cy="3.4" r="0.65" fill="#4b68a8"/></svg>
<svg class="abs" style="left:312.8px;top:381.5px" width="11" height="14" viewBox="0 0 11 14"><g fill="none" stroke="#f0a03c" stroke-width="1.05"><ellipse cx="5.5" cy="3.1" rx="4.8" ry="2.2"/><path d="M0.7 3.1V10.9A4.8 2.2 0 0 0 10.3 10.9V3.1"/><path d="M0.7 7A4.8 2.2 0 0 0 10.3 7"/></g></svg>
<div class="t" style="left:335.1px;top:382.09px;font-size:13.6px;line-height:13.6px;color:#ececee;font-weight:400;font-family:'Liberation Sans',sans-serif;-webkit-text-stroke:0.25px currentColor;">sessions</div>
<svg class="abs" style="left:460.8px;top:382px" width="12" height="12" viewBox="0 0 12 12"><circle cx="6" cy="6" r="5" fill="none" stroke="#4b68a8" stroke-width="1"/><path d="M6 5.2V8.8" stroke="#4b68a8" stroke-width="1.1"/><circle cx="6" cy="3.4" r="0.65" fill="#4b68a8"/></svg>
<div class="t" style="left:508px;top:164.99px;font-size:13.6px;line-height:13.6px;color:#ececee;font-weight:400;font-family:'Liberation Sans',sans-serif;-webkit-text-stroke:0.55px currentColor;">Document ID</div>
<div class="t" style="left:665.2px;top:164.99px;font-size:13.6px;line-height:13.6px;color:#ececee;font-weight:400;font-family:'Liberation Sans',sans-serif;-webkit-text-stroke:0.55px currentColor;">createdAt</div>
<div class="t" style="left:822px;top:164.99px;font-size:13.6px;line-height:13.6px;color:#ececee;font-weight:400;font-family:'Liberation Sans',sans-serif;-webkit-text-stroke:0.55px currentColor;">currency</div>
<div class="t" style="left:919px;top:164.99px;font-size:13.6px;line-height:13.6px;color:#ececee;font-weight:400;font-family:'Liberation Sans',sans-serif;-webkit-text-stroke:0.55px currentColor;">customerId</div>
<div class="t" style="left:1076px;top:164.99px;font-size:13.6px;line-height:13.6px;color:#ececee;font-weight:400;font-family:'Liberation Sans',sans-serif;-webkit-text-stroke:0.55px currentColor;">items</div>
<div class="abs" style="left:654.6px;top:163px;width:1px;height:17px;background:#3b3a40;"></div>
<div class="abs" style="left:811.4px;top:163px;width:1px;height:17px;background:#3b3a40;"></div>
<div class="abs" style="left:908.5px;top:163px;width:1px;height:17px;background:#3b3a40;"></div>
<div class="abs" style="left:1065.4px;top:163px;width:1px;height:17px;background:#3b3a40;"></div>
<div class="abs" style="left:1222.6px;top:163px;width:1px;height:17px;background:#3b3a40;"></div>
<div class="t" style="left:506px;top:202.17px;font-size:13.35px;line-height:13.35px;color:#f2f2f4;font-weight:400;font-family:'Liberation Mono',monospace;-webkit-text-stroke:0.4px currentColor;">ORD—20250127—7294</div>
<div class="t" style="left:663.5px;top:200.97px;font-size:13.5px;line-height:13.5px;color:#f0a04b;font-weight:400;font-family:'Liberation Sans',sans-serif;-webkit-text-stroke:0.25px currentColor;">27 January 2025</div>
<div class="t" style="left:820px;top:201.14px;font-size:13.3px;line-height:13.3px;color:#ececee;font-weight:400;font-family:'Liberation Sans',sans-serif;-webkit-text-stroke:0.25px currentColor;">USD</div>
<svg class="abs" style="left:918px;top:202.0px" width="11" height="11" viewBox="0 0 11 11"><circle cx="5.5" cy="5.5" r="5" fill="#6ccbf7"/><path d="M3.2 5.5H6.4M5 3.6L6.9 5.5L5 7.4" stroke="#2a5670" stroke-opacity="0.85" stroke-width="1.1" fill="none"/></svg>
<div class="t" style="left:931px;top:201.14px;font-size:13.3px;line-height:13.3px;color:#62c2f6;font-weight:400;font-family:'Liberation Sans',sans-serif;-webkit-text-stroke:0.25px currentColor;text-decoration:underline;text-underline-offset:1px;text-decoration-thickness:1px">users/Kf8mN2xL9…</div>
<div class="t" style="left:1075px;top:202.28px;font-size:13.2px;line-height:13.2px;color:#dcdcde;font-weight:400;font-family:'Liberation Mono',monospace;-webkit-text-stroke:0.4px currentColor;">[{<span style="color:#4f8fe8">"name"</span>: <span style="color:#e5564e">"Wirel…</span></div>
<div class="t" style="left:506px;top:234.17px;font-size:13.35px;line-height:13.35px;color:#f2f2f4;font-weight:400;font-family:'Liberation Mono',monospace;-webkit-text-stroke:0.4px currentColor;">ORD—20250129—3861</div>
<div class="t" style="left:663.5px;top:232.97px;font-size:13.5px;line-height:13.5px;color:#f0a04b;font-weight:400;font-family:'Liberation Sans',sans-serif;-webkit-text-stroke:0.25px currentColor;">29 January 2025</div>
<div class="t" style="left:820px;top:233.14px;font-size:13.3px;line-height:13.3px;color:#ececee;font-weight:400;font-family:'Liberation Sans',sans-serif;-webkit-text-stroke:0.25px currentColor;">USD</div>
<svg class="abs" style="left:918px;top:234.0px" width="11" height="11" viewBox="0 0 11 11"><circle cx="5.5" cy="5.5" r="5" fill="#6ccbf7"/><path d="M3.2 5.5H6.4M5 3.6L6.9 5.5L5 7.4" stroke="#2a5670" stroke-opacity="0.85" stroke-width="1.1" fill="none"/></svg>
<div class="t" style="left:931px;top:233.14px;font-size:13.3px;line-height:13.3px;color:#62c2f6;font-weight:400;font-family:'Liberation Sans',sans-serif;-webkit-text-stroke:0.25px currentColor;text-decoration:underline;text-underline-offset:1px;text-decoration-thickness:1px">users/Hj5kM8nP2q…</div>
<div class="t" style="left:1075px;top:234.28px;font-size:13.2px;line-height:13.2px;color:#dcdcde;font-weight:400;font-family:'Liberation Mono',monospace;-webkit-text-stroke:0.4px currentColor;">[{<span style="color:#4f8fe8">"name"</span>: <span style="color:#e5564e">"Mecha…</span></div>
<div class="t" style="left:506px;top:266.17px;font-size:13.35px;line-height:13.35px;color:#f2f2f4;font-weight:400;font-family:'Liberation Mono',monospace;-webkit-text-stroke:0.4px currentColor;">ORD—20250130—5512</div>
<div class="t" style="left:663.5px;top:264.97px;font-size:13.5px;line-height:13.5px;color:#f0a04b;font-weight:400;font-family:'Liberation Sans',sans-serif;-webkit-text-stroke:0.25px currentColor;">30 January 2025</div>
<div class="t" style="left:820px;top:265.14px;font-size:13.3px;line-height:13.3px;color:#ececee;font-weight:400;font-family:'Liberation Sans',sans-serif;-webkit-text-stroke:0.25px currentColor;">JPY</div>
<svg class="abs" style="left:918px;top:266.0px" width="11" height="11" viewBox="0 0 11 11"><circle cx="5.5" cy="5.5" r="5" fill="#6ccbf7"/><path d="M3.2 5.5H6.4M5 3.6L6.9 5.5L5 7.4" stroke="#2a5670" stroke-opacity="0.85" stroke-width="1.1" fill="none"/></svg>
<div class="t" style="left:931px;top:265.14px;font-size:13.3px;line-height:13.3px;color:#62c2f6;font-weight:400;font-family:'Liberation Sans',sans-serif;-webkit-text-stroke:0.25px currentColor;text-decoration:underline;text-underline-offset:1px;text-decoration-thickness:1px">users/Tn4pQ7rS9u…</div>
<div class="t" style="left:1075px;top:266.28px;font-size:13.2px;line-height:13.2px;color:#dcdcde;font-weight:400;font-family:'Liberation Mono',monospace;-webkit-text-stroke:0.4px currentColor;">[{<span style="color:#4f8fe8">"name"</span>: <span style="color:#e5564e">"Lapto…</span></div>
<div class="t" style="left:506px;top:298.17px;font-size:13.35px;line-height:13.35px;color:#f2f2f4;font-weight:400;font-family:'Liberation Mono',monospace;-webkit-text-stroke:0.4px currentColor;">ORD—20250131—9047</div>
<div class="t" style="left:663.5px;top:296.97px;font-size:13.5px;line-height:13.5px;color:#f0a04b;font-weight:400;font-family:'Liberation Sans',sans-serif;-webkit-text-stroke:0.25px currentColor;">31 January 2025</div>
<div class="t" style="left:820px;top:297.14px;font-size:13.3px;line-height:13.3px;color:#ececee;font-weight:400;font-family:'Liberation Sans',sans-serif;-webkit-text-stroke:0.25px currentColor;">USD</div>
<svg class="abs" style="left:918px;top:298.0px" width="11" height="11" viewBox="0 0 11 11"><circle cx="5.5" cy="5.5" r="5" fill="#6ccbf7"/><path d="M3.2 5.5H6.4M5 3.6L6.9 5.5L5 7.4" stroke="#2a5670" stroke-opacity="0.85" stroke-width="1.1" fill="none"/></svg>
<div class="t" style="left:931px;top:297.14px;font-size:13.3px;line-height:13.3px;color:#62c2f6;font-weight:400;font-family:'Liberation Sans',sans-serif;-webkit-text-stroke:0.25px currentColor;text-decoration:underline;text-underline-offset:1px;text-decoration-thickness:1px">users/Wm6oL3nK…</div>
<div class="t" style="left:1075px;top:298.28px;font-size:13.2px;line-height:13.2px;color:#dcdcde;font-weight:400;font-family:'Liberation Mono',monospace;-webkit-text-stroke:0.4px currentColor;">[{<span style="color:#4f8fe8">"name"</span>: <span style="color:#e5564e">"Noise…</span></div>
<div class="t" style="left:506px;top:330.17px;font-size:13.35px;line-height:13.35px;color:#f2f2f4;font-weight:400;font-family:'Liberation Mono',monospace;-webkit-text-stroke:0.4px currentColor;">ORD—20250201—2138</div>
<div class="t" style="left:663.5px;top:328.97px;font-size:13.5px;line-height:13.5px;color:#f0a04b;font-weight:400;font-family:'Liberation Sans',sans-serif;-webkit-text-stroke:0.25px currentColor;">1 February 2025</div>
<div class="t" style="left:820px;top:329.14px;font-size:13.3px;line-height:13.3px;color:#ececee;font-weight:400;font-family:'Liberation Sans',sans-serif;-webkit-text-stroke:0.25px currentColor;">EUR</div>
<svg class="abs" style="left:918px;top:330.0px" width="11" height="11" viewBox="0 0 11 11"><circle cx="5.5" cy="5.5" r="5" fill="#6ccbf7"/><path d="M3.2 5.5H6.4M5 3.6L6.9 5.5L5 7.4" stroke="#2a5670" stroke-opacity="0.85" stroke-width="1.1" fill="none"/></svg>
<div class="t" style="left:931px;top:329.14px;font-size:13.3px;line-height:13.3px;color:#62c2f6;font-weight:400;font-family:'Liberation Sans',sans-serif;-webkit-text-stroke:0.25px currentColor;text-decoration:underline;text-underline-offset:1px;text-decoration-thickness:1px">users/Bx9cV4wZ7y…</div>
<div class="t" style="left:1075px;top:330.28px;font-size:13.2px;line-height:13.2px;color:#dcdcde;font-weight:400;font-family:'Liberation Mono',monospace;-webkit-text-stroke:0.4px currentColor;">[{<span style="color:#4f8fe8">"name"</span>: <span style="color:#e5564e">"Webca…</span></div>
<div class="t" style="left:506px;top:362.17px;font-size:13.35px;line-height:13.35px;color:#f2f2f4;font-weight:400;font-family:'Liberation Mono',monospace;-webkit-text-stroke:0.4px currentColor;">ORD—20250202—6423</div>
<div class="t" style="left:663.5px;top:360.97px;font-size:13.5px;line-height:13.5px;color:#f0a04b;font-weight:400;font-family:'Liberation Sans',sans-serif;-webkit-text-stroke:0.25px currentColor;">2 February 2025</div>
<div class="t" style="left:820px;top:361.14px;font-size:13.3px;line-height:13.3px;color:#ececee;font-weight:400;font-family:'Liberation Sans',sans-serif;-webkit-text-stroke:0.25px currentColor;">EUR</div>
<svg class="abs" style="left:918px;top:362.0px" width="11" height="11" viewBox="0 0 11 11"><circle cx="5.5" cy="5.5" r="5" fill="#6ccbf7"/><path d="M3.2 5.5H6.4M5 3.6L6.9 5.5L5 7.4" stroke="#2a5670" stroke-opacity="0.85" stroke-width="1.1" fill="none"/></svg>
<div class="t" style="left:931px;top:361.14px;font-size:13.3px;line-height:13.3px;color:#62c2f6;font-weight:400;font-family:'Liberation Sans',sans-serif;-webkit-text-stroke:0.25px currentColor;text-decoration:underline;text-underline-offset:1px;text-decoration-thickness:1px">users/Dp2hR5tW8…</div>
<div class="t" style="left:1075px;top:362.28px;font-size:13.2px;line-height:13.2px;color:#dcdcde;font-weight:400;font-family:'Liberation Mono',monospace;-webkit-text-stroke:0.4px currentColor;">[{<span style="color:#4f8fe8">"name"</span>: <span style="color:#e5564e">"Ergon…</span></div>
<div class="t" style="left:506px;top:394.17px;font-size:13.35px;line-height:13.35px;color:#f2f2f4;font-weight:400;font-family:'Liberation Mono',monospace;-webkit-text-stroke:0.4px currentColor;">ORD—20250203—1789</div>
<div class="t" style="left:663.5px;top:392.97px;font-size:13.5px;line-height:13.5px;color:#f0a04b;font-weight:400;font-family:'Liberation Sans',sans-serif;-webkit-text-stroke:0.25px currentColor;">3 February 2025</div>
<div class="t" style="left:820px;top:393.14px;font-size:13.3px;line-height:13.3px;color:#ececee;font-weight:400;font-family:'Liberation Sans',sans-serif;-webkit-text-stroke:0.25px currentColor;">USD</div>
<svg class="abs" style="left:918px;top:394.0px" width="11" height="11" viewBox="0 0 11 11"><circle cx="5.5" cy="5.5" r="5" fill="#6ccbf7"/><path d="M3.2 5.5H6.4M5 3.6L6.9 5.5L5 7.4" stroke="#2a5670" stroke-opacity="0.85" stroke-width="1.1" fill="none"/></svg>
<div class="t" style="left:931px;top:393.14px;font-size:13.3px;line-height:13.3px;color:#62c2f6;font-weight:400;font-family:'Liberation Sans',sans-serif;-webkit-text-stroke:0.25px currentColor;text-decoration:underline;text-underline-offset:1px;text-decoration-thickness:1px">users/Fs7jU6vX3z…</div>
<div class="t" style="left:1075px;top:394.28px;font-size:13.2px;line-height:13.2px;color:#dcdcde;font-weight:400;font-family:'Liberation Mono',monospace;-webkit-text-stroke:0.4px currentColor;">[{<span style="color:#4f8fe8">"name"</span>: <span style="color:#e5564e">"USB H…</span></div>
<div class="t" style="left:506px;top:426.17px;font-size:13.35px;line-height:13.35px;color:#f2f2f4;font-weight:400;font-family:'Liberation Mono',monospace;-webkit-text-stroke:0.4px currentColor;">ORD—20250204—4356</div>
<div class="t" style="left:663.5px;top:424.97px;font-size:13.5px;line-height:13.5px;color:#f0a04b;font-weight:400;font-family:'Liberation Sans',sans-serif;-webkit-text-stroke:0.25px currentColor;">4 February 2025</div>
<div class="t" style="left:820px;top:425.14px;font-size:13.3px;line-height:13.3px;color:#ececee;font-weight:400;font-family:'Liberation Sans',sans-serif;-webkit-text-stroke:0.25px currentColor;">USD</div>
<svg class="abs" style="left:918px;top:426.0px" width="11" height="11" viewBox="0 0 11 11"><circle cx="5.5" cy="5.5" r="5" fill="#6ccbf7"/><path d="M3.2 5.5H6.4M5 3.6L6.9 5.5L5 7.4" stroke="#2a5670" stroke-opacity="0.85" stroke-width="1.1" fill="none"/></svg>
<div class="t" style="left:931px;top:425.14px;font-size:13.3px;line-height:13.3px;color:#62c2f6;font-weight:400;font-family:'Liberation Sans',sans-serif;-webkit-text-stroke:0.25px currentColor;text-decoration:underline;text-underline-offset:1px;text-decoration-thickness:1px">users/Gt1kW4xY7z…</div>
<div class="t" style="left:1075px;top:426.28px;font-size:13.2px;line-height:13.2px;color:#dcdcde;font-weight:400;font-family:'Liberation Mono',monospace;-webkit-text-stroke:0.4px currentColor;">[{<span style="color:#4f8fe8">"name"</span>: <span style="color:#e5564e">"Drawi…</span></div>
<div class="t" style="left:506px;top:458.17px;font-size:13.35px;line-height:13.35px;color:#f2f2f4;font-weight:400;font-family:'Liberation Mono',monospace;-webkit-text-stroke:0.4px currentColor;">ORD—20250205—8391</div>
<div class="t" style="left:663.5px;top:456.97px;font-size:13.5px;line-height:13.5px;color:#f0a04b;font-weight:400;font-family:'Liberation Sans',sans-serif;-webkit-text-stroke:0.25px currentColor;">5 February 2025</div>
<div class="t" style="left:820px;top:457.14px;font-size:13.3px;line-height:13.3px;color:#ececee;font-weight:400;font-family:'Liberation Sans',sans-serif;-webkit-text-stroke:0.25px currentColor;">USD</div>
<svg class="abs" style="left:918px;top:458.0px" width="11" height="11" viewBox="0 0 11 11"><circle cx="5.5" cy="5.5" r="5" fill="#6ccbf7"/><path d="M3.2 5.5H6.4M5 3.6L6.9 5.5L5 7.4" stroke="#2a5670" stroke-opacity="0.85" stroke-width="1.1" fill="none"/></svg>
<div class="t" style="left:931px;top:457.14px;font-size:13.3px;line-height:13.3px;color:#62c2f6;font-weight:400;font-family:'Liberation Sans',sans-serif;-webkit-text-stroke:0.25px currentColor;text-decoration:underline;text-underline-offset:1px;text-decoration-thickness:1px">users/Kf8mN2xL9…</div>
<div class="t" style="left:1075px;top:458.28px;font-size:13.2px;line-height:13.2px;color:#dcdcde;font-weight:400;font-family:'Liberation Mono',monospace;-webkit-text-stroke:0.4px currentColor;">[{<span style="color:#4f8fe8">"name"</span>: <span style="color:#e5564e">"Porta…</span></div>
<div class="t" style="left:506px;top:490.17px;font-size:13.35px;line-height:13.35px;color:#f2f2f4;font-weight:400;font-family:'Liberation Mono',monospace;-webkit-text-stroke:0.4px currentColor;">ORD—20250206—0275</div>
<div class="t" style="left:663.5px;top:488.97px;font-size:13.5px;line-height:13.5px;color:#f0a04b;font-weight:400;font-family:'Liberation Sans',sans-serif;-webkit-text-stroke:0.25px currentColor;">6 February 2025</div>
<div class="t" style="left:820px;top:489.14px;font-size:13.3px;line-height:13.3px;color:#ececee;font-weight:400;font-family:'Liberation Sans',sans-serif;-webkit-text-stroke:0.25px currentColor;">GBP</div>
<svg class="abs" style="left:918px;top:490.0px" width="11" height="11" viewBox="0 0 11 11"><circle cx="5.5" cy="5.5" r="5" fill="#6ccbf7"/><path d="M3.2 5.5H6.4M5 3.6L6.9 5.5L5 7.4" stroke="#2a5670" stroke-opacity="0.85" stroke-width="1.1" fill="none"/></svg>
<div class="t" style="left:931px;top:489.14px;font-size:13.3px;line-height:13.3px;color:#62c2f6;font-weight:400;font-family:'Liberation Sans',sans-serif;-webkit-text-stroke:0.25px currentColor;text-decoration:underline;text-underline-offset:1px;text-decoration-thickness:1px">users/Hj5kM8nP2q…</div>
<div class="t" style="left:1075px;top:490.28px;font-size:13.2px;line-height:13.2px;color:#dcdcde;font-weight:400;font-family:'Liberation Mono',monospace;-webkit-text-stroke:0.4px currentColor;">[{<span style="color:#4f8fe8">"name"</span>: <span style="color:#e5564e">"Desk…</span></div>
<div class="t" style="left:824.5px;top:921.94px;font-size:10.7px;line-height:10.7px;color:#a9a8ad;font-weight:400;font-family:'Liberation Sans',sans-serif;-webkit-text-stroke:0.25px currentColor;">10 documents</div>
<div class="abs" style="left:1227px;top:190px;width:269px;height:340px;overflow:hidden">
<div class="abs" style="left:-5px;top:12px;width:60px;height:10px;background:#3a5fb0;filter:blur(3px);opacity:0.09"></div>
<div class="abs" style="left:77px;top:12px;width:58px;height:10px;background:#d04a40;filter:blur(3px);opacity:0.08"></div>
<div class="abs" style="left:162px;top:12px;width:55px;height:10px;background:#b0b0b8;filter:blur(3px);opacity:0.055"></div>
<div class="abs" style="left:-5px;top:44px;width:60px;height:10px;background:#3a5fb0;filter:blur(3px);opacity:0.09"></div>
<div class="abs" style="left:77px;top:44px;width:58px;height:10px;background:#d04a40;filter:blur(3px);opacity:0.08"></div>
<div class="abs" style="left:162px;top:44px;width:55px;height:10px;background:#b0b0b8;filter:blur(3px);opacity:0.055"></div>
<div class="abs" style="left:-5px;top:76px;width:60px;height:10px;background:#3a5fb0;filter:blur(3px);opacity:0.09"></div>
<div class="abs" style="left:77px;top:76px;width:58px;height:10px;background:#d04a40;filter:blur(3px);opacity:0.08"></div>
<div class="abs" style="left:162px;top:76px;width:55px;height:10px;background:#b0b0b8;filter:blur(3px);opacity:0.055"></div>
<div class="abs" style="left:-5px;top:108px;width:60px;height:10px;background:#3a5fb0;filter:blur(3px);opacity:0.09"></div>
<div class="abs" style="left:77px;top:108px;width:58px;height:10px;background:#d04a40;filter:blur(3px);opacity:0.08"></div>
<div class="abs" style="left:162px;top:108px;width:55px;height:10px;background:#b0b0b8;filter:blur(3px);opacity:0.055"></div>
<div class="abs" style="left:-5px;top:140px;width:60px;height:10px;background:#3a5fb0;filter:blur(3px);opacity:0.09"></div>
<div class="abs" style="left:77px;top:140px;width:58px;height:10px;background:#d04a40;filter:blur(3px);opacity:0.08"></div>
<div class="abs" style="left:162px;top:140px;width:55px;height:10px;background:#b0b0b8;filter:blur(3px);opacity:0.055"></div>
<div class="abs" style="left:-5px;top:172px;width:60px;height:10px;background:#3a5fb0;filter:blur(3px);opacity:0.09"></div>
<div class="abs" style="left:77px;top:172px;width:58px;height:10px;background:#d04a40;filter:blur(3px);opacity:0.08"></div>
<div class="abs" style="left:162px;top:172px;width:55px;height:10px;background:#b0b0b8;filter:blur(3px);opacity:0.055"></div>
<div class="abs" style="left:-5px;top:204px;width:60px;height:10px;background:#3a5fb0;filter:blur(3px);opacity:0.09"></div>
<div class="abs" style="left:77px;top:204px;width:58px;height:10px;background:#d04a40;filter:blur(3px);opacity:0.08"></div>
<div class="abs" style="left:162px;top:204px;width:55px;height:10px;background:#b0b0b8;filter:blur(3px);opacity:0.055"></div>
<div class="abs" style="left:-5px;top:236px;width:60px;height:10px;background:#3a5fb0;filter:blur(3px);opacity:0.09"></div>
<div class="abs" style="left:77px;top:236px;width:58px;height:10px;background:#d04a40;filter:blur(3px);opacity:0.08"></div>
<div class="abs" style="left:162px;top:236px;width:55px;height:10px;background:#b0b0b8;filter:blur(3px);opacity:0.055"></div>
<div class="abs" style="left:-5px;top:268px;width:60px;height:10px;background:#3a5fb0;filter:blur(3px);opacity:0.09"></div>
<div class="abs" style="left:77px;top:268px;width:58px;height:10px;background:#d04a40;filter:blur(3px);opacity:0.08"></div>
<div class="abs" style="left:162px;top:268px;width:55px;height:10px;background:#b0b0b8;filter:blur(3px);opacity:0.055"></div>
<div class="abs" style="left:-5px;top:300px;width:60px;height:10px;background:#3a5fb0;filter:blur(3px);opacity:0.09"></div>
<div class="abs" style="left:77px;top:300px;width:58px;height:10px;background:#d04a40;filter:blur(3px);opacity:0.08"></div>
<div class="abs" style="left:162px;top:300px;width:55px;height:10px;background:#b0b0b8;filter:blur(3px);opacity:0.055"></div>
</div>
<div class="abs" style="left:1227px;top:238px;width:269px;height:68px;overflow:hidden"><div class="abs" style="left:-10px;top:17px;width:290px;height:33px;background:#24378a;filter:blur(4px);opacity:0.62"></div></div>
<div class="abs" style="left:1375px;top:46px;width:111px;height:36px;border-radius:18px;border:1px solid #3a3842;background:#1c1b21"></div>
<svg class="abs" style="left:1383px;top:54px" width="20" height="21" viewBox="0 0 20 21"><g fill="none" stroke="#e6e6e8" stroke-width="1.15" stroke-linejoin="round" stroke-linecap="round"><path d="M12.7 1.4L4.2 11.6H9.4L7.3 19.6L15.8 9.4H10.6Z"/><path d="M3.3 3.7L16.7 16.9"/></g></svg>
<svg class="abs" style="left:1419px;top:54px" width="20" height="21" viewBox="0 0 20 21"><g fill="none" stroke="#e6e6e8" stroke-width="1.3" stroke-linecap="round" stroke-linejoin="round"><path d="M17.4 11.8A7.1 7.1 0 1 1 11.6 4.8"/><path d="M9.8 1.6L13.6 5.4L9.9 9.2"/></g></svg>
<svg class="abs" style="left:1455px;top:56px" width="22" height="17" viewBox="0 0 22 17"><rect x="1.6" y="1.4" width="18.6" height="14" rx="3" fill="none" stroke="#e6e6e8" stroke-width="1.3"/><path d="M14.2 1.4V15.4" stroke="#e6e6e8" stroke-width="1.3"/><path d="M16.6 4.6H17.8M16.6 6.6H17.8M16.6 8.6H17.8" stroke="#bdbdc0" stroke-width="1"/></svg>
<div class="t" style="left:1242.3px;top:107.86px;font-size:13.4px;line-height:13.4px;color:#f2f2f4;font-weight:700;font-family:'Liberation Sans',sans-serif;-webkit-text-stroke:0.1px currentColor;">Document</div>
<svg class="abs" style="left:1463px;top:107px" width="16" height="15" viewBox="0 0 16 15"><path d="M8 1.2L9.9 5.5L14.6 5.9L11 9L12.1 13.6L8 11.2L3.9 13.6L5 9L1.4 5.9L6.1 5.5Z" fill="none" stroke="#b4b4b9" stroke-width="1.05" stroke-linejoin="round"/></svg>
<div class="t" style="left:1242.3px;top:129.71px;font-size:11.8px;line-height:11.8px;color:#e6e6e8;font-weight:400;font-family:'Liberation Sans',sans-serif;-webkit-text-stroke:0.25px currentColor;">ORD-20250130-5512</div>
<div class="t" style="left:1242.3px;top:149.11px;font-size:10.5px;line-height:10.5px;color:#98979c;font-weight:400;font-family:'Liberation Sans',sans-serif;-webkit-text-stroke:0.25px currentColor;">Created:</div>
<div class="t" style="left:1288.6px;top:149.11px;font-size:10.5px;line-height:10.5px;color:#e6e6e8;font-weight:400;font-family:'Liberation Sans',sans-serif;-webkit-text-stroke:0.25px currentColor;">30/1/2025, 10:00 am</div>
<div class="t" style="left:1242.3px;top:168.11px;font-size:10.5px;line-height:10.5px;color:#98979c;font-weight:400;font-family:'Liberation Sans',sans-serif;-webkit-text-stroke:0.25px currentColor;">Updated:</div>
<div class="t" style="left:1291.3px;top:168.11px;font-size:10.5px;line-height:10.5px;color:#e6e6e8;font-weight:400;font-family:'Liberation Sans',sans-serif;-webkit-text-stroke:0.25px currentColor;">30/1/2025, 10:00 am</div>
<div class="t" style="left:1242.3px;top:187.11px;font-size:10.5px;line-height:10.5px;color:#98979c;font-weight:400;font-family:'Liberation Sans',sans-serif;-webkit-text-stroke:0.25px currentColor;">Size:</div>
<div class="t" style="left:1269.6px;top:187.11px;font-size:10.5px;line-height:10.5px;color:#e6e6e8;font-weight:400;font-family:'Liberation Sans',sans-serif;-webkit-text-stroke:0.25px currentColor;">~472 B</div>
<div class="abs" style="left:1242px;top:215px;width:238px;height:1px;background:rgba(255,255,255,0.09);"></div>
<div class="t" style="left:1242.3px;top:240.49px;font-size:11px;line-height:11px;color:#ececee;font-weight:700;font-family:'Liberation Sans',sans-serif;-webkit-text-stroke:0.3px currentColor;">createdAt</div>
<div class="abs" style="left:1301px;top:238.3px;width:64.6px;height:14.5px;background:#3b2b1d;border-radius:7px"></div><div class="t" style="left:1307px;top:240.64px;font-size:10px;line-height:10px;color:#f3a24a;font-weight:700;font-family:'Liberation Sans',sans-serif;-webkit-text-stroke:0.3px currentColor;">timestamp</div>
<div class="t" style="left:1242.3px;top:259.00px;font-size:13px;line-height:13px;color:#f3a24a;font-weight:700;font-family:'Liberation Sans',sans-serif;-webkit-text-stroke:0.1px currentColor;">30/1/2025, 10:00 am</div>
<div class="abs" style="left:1242px;top:279px;width:238px;height:1px;background:rgba(255,255,255,0.09);"></div>
<div class="t" style="left:1242.3px;top:288.29px;font-size:11px;line-height:11px;color:#ececee;font-weight:700;font-family:'Liberation Sans',sans-serif;-webkit-text-stroke:0.3px currentColor;">currency</div>
<div class="abs" style="left:1296px;top:286.3px;width:41px;height:14.5px;background:#38373d;border-radius:7px"></div><div class="t" style="left:1302px;top:288.64px;font-size:10px;line-height:10px;color:#d6d6d9;font-weight:700;font-family:'Liberation Sans',sans-serif;-webkit-text-stroke:0.3px currentColor;">string</div>
<div class="t" style="left:1242.3px;top:306.80px;font-size:13px;line-height:13px;color:#ececee;font-weight:400;font-family:'Liberation Sans',sans-serif;-webkit-text-stroke:0.25px currentColor;">JPY</div>
<div class="abs" style="left:1242px;top:327px;width:238px;height:1px;background:rgba(255,255,255,0.09);"></div>
<div class="t" style="left:1242.3px;top:336.29px;font-size:11px;line-height:11px;color:#ececee;font-weight:700;font-family:'Liberation Sans',sans-serif;-webkit-text-stroke:0.3px currentColor;">customerId</div>
<div class="abs" style="left:1309px;top:334.3px;width:59.4px;height:14.5px;background:#1e3546;border-radius:7px"></div><div class="t" style="left:1315px;top:336.64px;font-size:10px;line-height:10px;color:#5ac8f5;font-weight:700;font-family:'Liberation Sans',sans-serif;-webkit-text-stroke:0.3px currentColor;">reference</div>
<svg class="abs" style="left:1242.3px;top:355.8px" width="11" height="11" viewBox="0 0 11 11"><circle cx="5.5" cy="5.5" r="5" fill="#5ccbf7"/><path d="M3.2 5.5H6.4M5 3.6L6.9 5.5L5 7.4" stroke="#1f4a60" stroke-width="1.1" fill="none"/></svg>
<div class="t" style="left:1256.4px;top:354.74px;font-size:13.3px;line-height:13.3px;color:#5ac8f5;font-weight:400;font-family:'Liberation Sans',sans-serif;-webkit-text-stroke:0.25px currentColor;text-decoration:underline;text-underline-offset:1px;text-decoration-thickness:1px">users/Tn4pQ7rS9uVwY1zA3bCf</div>
<div class="abs" style="left:1242px;top:375px;width:238px;height:1px;background:rgba(255,255,255,0.09);"></div>
<svg class="abs" style="left:1241px;top:383px" width="8" height="11" viewBox="0 0 8 11"><path d="M2.2 1.6L6 5.5L2.2 9.4" fill="none" stroke="#e6e6e8" stroke-width="1.3"/></svg>
<div class="t" style="left:1254.3px;top:384.69px;font-size:11px;line-height:11px;color:#ececee;font-weight:700;font-family:'Liberation Sans',sans-serif;-webkit-text-stroke:0.3px currentColor;">items</div>
<div class="abs" style="left:1290px;top:382.3px;width:37.5px;height:14.5px;background:#2f2e34;border-radius:7px"></div><div class="t" style="left:1296px;top:384.64px;font-size:10px;line-height:10px;color:#9a999f;font-weight:700;font-family:'Liberation Sans',sans-serif;-webkit-text-stroke:0.3px currentColor;">array</div>
<div class="abs" style="left:1242px;top:403px;width:238px;height:1px;background:rgba(255,255,255,0.09);"></div>
<svg class="abs" style="left:1241px;top:411.5px" width="8" height="11" viewBox="0 0 8 11"><path d="M2.2 1.6L6 5.5L2.2 9.4" fill="none" stroke="#e6e6e8" stroke-width="1.3"/></svg>
<div class="t" style="left:1254.3px;top:412.39px;font-size:11px;line-height:11px;color:#ececee;font-weight:700;font-family:'Liberation Sans',sans-serif;-webkit-text-stroke:0.3px currentColor;">shippingAddress</div>
<div class="abs" style="left:1351px;top:410.3px;width:33.7px;height:14.5px;background:#2f2e34;border-radius:7px"></div><div class="t" style="left:1357px;top:412.64px;font-size:10px;line-height:10px;color:#9a999f;font-weight:700;font-family:'Liberation Sans',sans-serif;-webkit-text-stroke:0.3px currentColor;">map</div>
<div class="abs" style="left:1242px;top:431px;width:238px;height:1px;background:rgba(255,255,255,0.09);"></div>
<div class="t" style="left:1242.3px;top:439.69px;font-size:11px;line-height:11px;color:#ececee;font-weight:700;font-family:'Liberation Sans',sans-serif;-webkit-text-stroke:0.3px currentColor;">status</div>
<div class="abs" style="left:1282px;top:438.3px;width:40.8px;height:14.5px;background:#38373d;border-radius:7px"></div><div class="t" style="left:1288px;top:440.64px;font-size:10px;line-height:10px;color:#d6d6d9;font-weight:700;font-family:'Liberation Sans',sans-serif;-webkit-text-stroke:0.3px currentColor;">string</div>
<div class="t" style="left:1242.3px;top:458.29px;font-size:13.6px;line-height:13.6px;color:#ececee;font-weight:400;font-family:'Liberation Sans',sans-serif;-webkit-text-stroke:0.25px currentColor;">processing</div>
<div class="abs" style="left:1242px;top:479px;width:238px;height:1px;background:rgba(255,255,255,0.09);"></div>
<div class="t" style="left:1242.3px;top:488.09px;font-size:11px;line-height:11px;color:#ececee;font-weight:700;font-family:'Liberation Sans',sans-serif;-webkit-text-stroke:0.3px currentColor;">total</div>
<div class="abs" style="left:1272.9px;top:486.3px;width:45.7px;height:14.5px;background:#3a2046;border-radius:7px"></div><div class="t" style="left:1278.9px;top:488.64px;font-size:10px;line-height:10px;color:#e455f5;font-weight:700;font-family:'Liberation Sans',sans-serif;-webkit-text-stroke:0.3px currentColor;">double</div>
<div class="t" style="left:1242.3px;top:505.98px;font-size:14.2px;line-height:14.2px;color:#e455f5;font-weight:700;font-family:'Liberation Sans',sans-serif;-webkit-text-stroke:0.1px currentColor;">17478</div>
<div class="abs" style="left:1242px;top:527.5px;width:238px;height:1px;background:rgba(255,255,255,0.09);"></div>
<div class="t" style="left:1242.3px;top:536.19px;font-size:11px;line-height:11px;color:#ececee;font-weight:700;font-family:'Liberation Sans',sans-serif;-webkit-text-stroke:0.3px currentColor;">updatedAt</div>
<div class="abs" style="left:1305px;top:534.3px;width:64.4px;height:14.5px;background:#3b2b1d;border-radius:7px"></div><div class="t" style="left:1311px;top:536.63px;font-size:10px;line-height:10px;color:#f3a24a;font-weight:700;font-family:'Liberation Sans',sans-serif;-webkit-text-stroke:0.3px currentColor;">timestamp</div>
<div class="t" style="left:1242.3px;top:555.40px;font-size:13px;line-height:13px;color:#f3a24a;font-weight:700;font-family:'Liberation Sans',sans-serif;-webkit-text-stroke:0.1px currentColor;">30/1/2025, 10:00 am</div>
<div class="abs" style="left:1242px;top:575.3px;width:238px;height:1px;background:rgba(255,255,255,0.09);"></div>
<div class="t" style="left:1242.3px;top:593.74px;font-size:10px;line-height:10px;color:#98979c;font-weight:400;font-family:'Liberation Sans',sans-serif;-webkit-text-stroke:0.25px currentColor;">SUBCOLLECTIONS</div>
<svg class="abs" style="left:1242.3px;top:612.7px" width="9.5" height="12" viewBox="0 0 11 14"><g fill="none" stroke="#f0a03c" stroke-width="1.3"><ellipse cx="5.5" cy="3.1" rx="4.8" ry="2.2"/><path d="M0.7 3.1V10.9A4.8 2.2 0 0 0 10.3 10.9V3.1"/><path d="M0.7 7A4.8 2.2 0 0 0 10.3 7"/></g></svg>
<div class="t" style="left:1259px;top:612.25px;font-size:11.75px;line-height:11.75px;color:#e6e6e8;font-weight:400;font-family:'Liberation Sans',sans-serif;-webkit-text-stroke:0.25px currentColor;">users</div>
<svg class="abs" style="left:1472px;top:613.2px" width="8" height="11" viewBox="0 0 8 11"><path d="M2.2 1.6L6 5.5L2.2 9.4" fill="none" stroke="#6a6970" stroke-width="1.1"/></svg>
<svg class="abs" style="left:1242.3px;top:632.7px" width="9.5" height="12" viewBox="0 0 11 14"><g fill="none" stroke="#f0a03c" stroke-width="1.3"><ellipse cx="5.5" cy="3.1" rx="4.8" ry="2.2"/><path d="M0.7 3.1V10.9A4.8 2.2 0 0 0 10.3 10.9V3.1"/><path d="M0.7 7A4.8 2.2 0 0 0 10.3 7"/></g></svg>
<div class="t" style="left:1259px;top:632.25px;font-size:11.75px;line-height:11.75px;color:#e6e6e8;font-weight:400;font-family:'Liberation Sans',sans-serif;-webkit-text-stroke:0.25px currentColor;">orders</div>
<svg class="abs" style="left:1472px;top:633.2px" width="8" height="11" viewBox="0 0 8 11"><path d="M2.2 1.6L6 5.5L2.2 9.4" fill="none" stroke="#6a6970" stroke-width="1.1"/></svg>
<svg class="abs" style="left:1242.3px;top:652.7px" width="9.5" height="12" viewBox="0 0 11 14"><g fill="none" stroke="#f0a03c" stroke-width="1.3"><ellipse cx="5.5" cy="3.1" rx="4.8" ry="2.2"/><path d="M0.7 3.1V10.9A4.8 2.2 0 0 0 10.3 10.9V3.1"/><path d="M0.7 7A4.8 2.2 0 0 0 10.3 7"/></g></svg>
<div class="t" style="left:1259px;top:652.25px;font-size:11.75px;line-height:11.75px;color:#e6e6e8;font-weight:400;font-family:'Liberation Sans',sans-serif;-webkit-text-stroke:0.25px currentColor;">products</div>
<svg class="abs" style="left:1472px;top:653.2px" width="8" height="11" viewBox="0 0 8 11"><path d="M2.2 1.6L6 5.5L2.2 9.4" fill="none" stroke="#6a6970" stroke-width="1.1"/></svg>
<svg class="abs" style="left:1242.3px;top:672.7px" width="9.5" height="12" viewBox="0 0 11 14"><g fill="none" stroke="#f0a03c" stroke-width="1.3"><ellipse cx="5.5" cy="3.1" rx="4.8" ry="2.2"/><path d="M0.7 3.1V10.9A4.8 2.2 0 0 0 10.3 10.9V3.1"/><path d="M0.7 7A4.8 2.2 0 0 0 10.3 7"/></g></svg>
<div class="t" style="left:1259px;top:672.25px;font-size:11.75px;line-height:11.75px;color:#e6e6e8;font-weight:400;font-family:'Liberation Sans',sans-serif;-webkit-text-stroke:0.25px currentColor;">analytics_events</div>
<svg class="abs" style="left:1472px;top:673.2px" width="8" height="11" viewBox="0 0 8 11"><path d="M2.2 1.6L6 5.5L2.2 9.4" fill="none" stroke="#6a6970" stroke-width="1.1"/></svg>
<svg class="abs" style="left:1242.3px;top:692.7px" width="9.5" height="12" viewBox="0 0 11 14"><g fill="none" stroke="#f0a03c" stroke-width="1.3"><ellipse cx="5.5" cy="3.1" rx="4.8" ry="2.2"/><path d="M0.7 3.1V10.9A4.8 2.2 0 0 0 10.3 10.9V3.1"/><path d="M0.7 7A4.8 2.2 0 0 0 10.3 7"/></g></svg>
<div class="t" style="left:1259px;top:692.25px;font-size:11.75px;line-height:11.75px;color:#e6e6e8;font-weight:400;font-family:'Liberation Sans',sans-serif;-webkit-text-stroke:0.25px currentColor;">notifications</div>
<svg class="abs" style="left:1472px;top:693.2px" width="8" height="11" viewBox="0 0 8 11"><path d="M2.2 1.6L6 5.5L2.2 9.4" fill="none" stroke="#6a6970" stroke-width="1.1"/></svg>
<svg class="abs" style="left:1242.3px;top:712.7px" width="9.5" height="12" viewBox="0 0 11 14"><g fill="none" stroke="#f0a03c" stroke-width="1.3"><ellipse cx="5.5" cy="3.1" rx="4.8" ry="2.2"/><path d="M0.7 3.1V10.9A4.8 2.2 0 0 0 10.3 10.9V3.1"/><path d="M0.7 7A4.8 2.2 0 0 0 10.3 7"/></g></svg>
<div class="t" style="left:1259px;top:712.25px;font-size:11.75px;line-height:11.75px;color:#e6e6e8;font-weight:400;font-family:'Liberation Sans',sans-serif;-webkit-text-stroke:0.25px currentColor;">sessions</div>
<svg class="abs" style="left:1472px;top:713.2px" width="8" height="11" viewBox="0 0 8 11"><path d="M2.2 1.6L6 5.5L2.2 9.4" fill="none" stroke="#6a6970" stroke-width="1.1"/></svg>
<div class="abs" style="left:1227px;top:892px;width:269px;height:1px;background:#34333a;"></div>
<div class="abs" style="left:1242px;top:904px;width:69px;height:24px;background:#3b7cf0;border-radius:5px"></div>
<svg class="abs" style="left:1253px;top:909px" width="14" height="14" viewBox="0 0 14 14"><path d="M2.4 11.6L11 3" stroke="#fff" stroke-width="1.4" stroke-linecap="round"/></svg>
<div class="t" style="left:1275.5px;top:910.42px;font-size:12.5px;line-height:12.5px;color:#ffffff;font-weight:700;font-family:'Liberation Sans',sans-serif;-webkit-text-stroke:0.1px currentColor;">Edit</div>
<svg class="abs" style="left:1320px;top:907px" width="32" height="18" viewBox="0 0 32 18"><circle cx="9.5" cy="9" r="6" fill="none" stroke="#3f7fe8" stroke-width="1.2"/><g fill="#3f7fe8"><circle cx="6.8" cy="9" r="0.8"/><circle cx="9.5" cy="9" r="0.8"/><circle cx="12.2" cy="9" r="0.8"/></g><path d="M20.2 7.4L23.2 10.4L26.2 7.4" fill="none" stroke="#3f7fe8" stroke-width="1.5" stroke-linecap="round" stroke-linejoin="round"/></svg>
<div class="abs" style="left:1441px;top:903px;width:39px;height:25px;background:#2a1c1f;border-radius:6px"></div>
<svg class="abs" style="left:1452px;top:908px" width="16" height="16" viewBox="0 0 16 16"><g fill="none" stroke="#f0524e" stroke-width="1.2" stroke-linecap="round" stroke-linejoin="round"><path d="M2.2 3.6H13.9"/><path d="M5.6 3.4V2.6C5.6 1.7 6.2 1.1 7.1 1.1H8.9C9.8 1.1 10.4 1.7 10.4 2.6V3.4"/><path d="M3.3 3.8L4.3 14.4H11.7L12.7 3.8"/><path d="M6.6 5.8V12.6M8.6 5.8V12.6M10.6 5.8V12.6" stroke-width="0.9"/></g></svg></div></body></html>
